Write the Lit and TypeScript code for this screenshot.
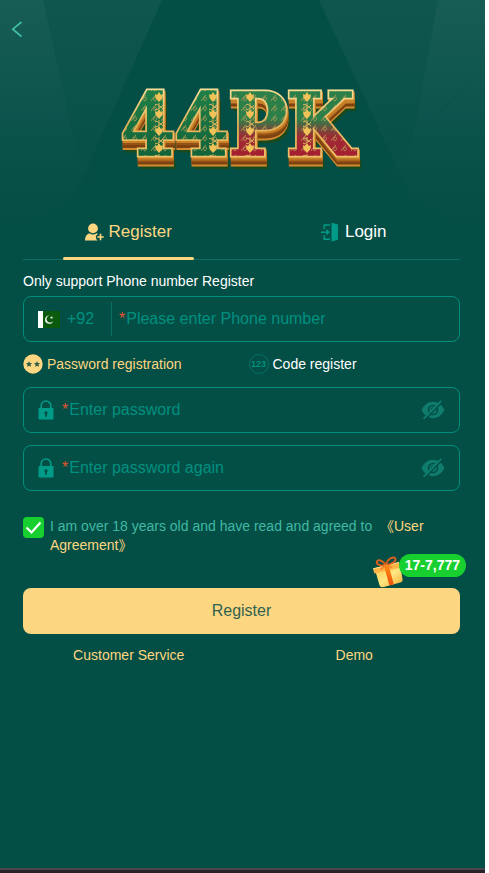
import { LitElement, html, css, svg } from "lit";
import { customElement, state } from "lit/decorators.js";

const backIcon = html`<svg width="12" height="18" viewBox="0 0 12 18" aria-hidden="true">
  <path d="M10.5 2 1.8 9.2l8.7 7.3" fill="none" stroke="#3fbfa8" stroke-width="1.7" />
</svg>`;

const userIcon = html`<svg width="20" height="20" viewBox="0 0 20 20" aria-hidden="true">
  <circle cx="9" cy="6.4" r="4.9" fill="#fdd681" />
  <path d="M1 18.6c0-4.200 1.600-6.400 4.400-7.400 2 1.600 5.200 1.600 7.200 0 .5.200.9.400 1.300.7-1.500.8-2.100 2-2 3.400.1 1.400.8 2.600 2 3.300z" fill="#fdd681" />
  <path d="M16.500 11.800v6.400M13.300 15h6.400" stroke="#fdd681" stroke-width="1.700" />
</svg>`;

const doorIcon = html`<svg width="20" height="20" viewBox="0 0 20 20" aria-hidden="true">
  <path d="M11.500.800 18 2.600v15.200L11.500 19.600z" fill="#009b88" />
  <path d="M10 3H4.200v4M4.200 13.300V17.300H10M1 10.200h7.500M6.300 7.800l2.500 2.400-2.500 2.400" fill="none" stroke="#009b88" stroke-width="1.400" />
</svg>`;

const flagIcon = html`<svg width="22" height="17" viewBox="0 0 22 17" aria-hidden="true">
  <rect width="22" height="17" fill="#0c5a0d" />
  <rect width="5" height="17" fill="#fff" />
  <path d="M11.500 4.400a4.200 4.200 0 1 0 3.700 5.500 3.600 3.600 0 1 1-3.700-5.500z" fill="#e6efe4" />
  <path d="m13.300 4.900.6 1 1.200-.1-.8.900.5 1.100-1.100-.5-.9.800.1-1.200-1-.6 1.200-.3z" fill="#e6efe4" />
</svg>`;

const starsIcon = html`<svg width="20" height="20" viewBox="0 0 20 20" aria-hidden="true">
  <circle cx="10" cy="10" r="9.700" fill="#fdd681" />
  <path d="m6 6.900.9 2 2.200.2-1.600 1.500.5 2.200L6 11.700l-2 1.100.5-2.200L2.900 9.100l2.200-.2zM14 6.900l.9 2 2.200.2-1.600 1.500.5 2.200-2-1.100-2 1.100.5-2.200-1.600-1.500 2.200-.2z" fill="#2d5e4a" />
</svg>`;

const lockIcon = html`<svg width="16" height="20" viewBox="0 0 16 20" aria-hidden="true">
  <path d="M3.200 9V5.800a4.800 4.800 0 0 1 9.600 0V9" fill="none" stroke="#009b88" stroke-width="1.600" />
  <rect x=".5" y="8" width="15" height="11.500" rx="1" fill="#009b88" />
  <path d="M8 11.200a1.700 1.700 0 0 1 .9 3.100v2.400H7.100v-2.400a1.700 1.700 0 0 1 .9-3.100z" fill="#034e45" />
</svg>`;

const eyeIcon = html`<svg width="24" height="20" viewBox="0 0 24 20" aria-hidden="true">
  <path d="M.5 10C3 5 7 1.800 12 1.800S21 5 23.500 10C21 15 17 18.200 12 18.200S3 15 .5 10z" fill="#0f7c6e" />
  <circle cx="12" cy="10" r="5.300" fill="#034e45" />
  <circle cx="12" cy="10" r="3.700" fill="#0f7c6e" />
  <path d="M12 7.800a2.200 2.200 0 0 0-2.200 2.200" fill="none" stroke="#034e45" stroke-width="1" />
  <path d="M21.200 2 4.600 19.200" stroke="#034e45" stroke-width="1.600" />
  <path d="M20.300.8 2.600 18.800" stroke="#0f7c6e" stroke-width="1.800" />
</svg>`;

const giftIcon = html`<svg class="gift" width="32" height="32" viewBox="0 0 32 32" aria-hidden="true">
  <defs>
    <linearGradient id="gift-box" x1="0" y1="0" x2="1" y2="1">
      <stop offset="0" stop-color="#ffc94d" /><stop offset=".5" stop-color="#ffe680" /><stop offset="1" stop-color="#fba930" />
    </linearGradient>
    <linearGradient id="gift-band" x1="0" y1="0" x2="0" y2="1">
      <stop offset="0" stop-color="#ff8a12" /><stop offset="1" stop-color="#f0520c" />
    </linearGradient>
  </defs>
  <path d="M3.500 15.500 28.500 10.500l2 12.600a3 3 0 0 1-2.300 3.500L11 31.200a3 3 0 0 1-3.500-2z" fill="url(#gift-box)" />
  <path d="M1 12.600 27 6.200l1.300 5.500L2.300 17.600z" fill="#ffb545" />
  <path d="M1.200 12.800 27 6.400" stroke="#ffe08a" stroke-width="1" />
  <path d="m12 10 4.500-1.100 5.400 19.500-4.500 1.100z" fill="url(#gift-band)" />
  <path d="M14 9C9 2.500 4.500 3.500 4.800 6.500 5.200 9.500 10 9.800 14 9zM14 9c1-6 7.500-9 9.200-6.600C25 5.500 19.500 8 14 9z" fill="none" stroke="#d9601e" stroke-width="1.900" />
  <path d="M14 9 8.500 13.500M14 9l6 2.500" stroke="#f5832c" stroke-width="1.800" />
</svg>`;

const beams = html`<svg class="beams" viewBox="0 0 485 250" preserveAspectRatio="none" aria-hidden="true">
  <defs>
    <linearGradient id="beam" gradientUnits="userSpaceOnUse" x1="0" y1="0" x2="0" y2="230">
      <stop offset="0" stop-color="#fff" stop-opacity=".05" /><stop offset="1" stop-color="#fff" stop-opacity="0" />
    </linearGradient>
    <linearGradient id="glow" gradientUnits="userSpaceOnUse" x1="0" y1="0" x2="0" y2="190">
      <stop offset="0" stop-color="#fff" stop-opacity=".035" /><stop offset="1" stop-color="#fff" stop-opacity="0" />
    </linearGradient>
  </defs>
  <g fill="url(#beam)">
    <path d="M0 0H162L75 195 0 240z" />
    <path d="M319 0H485V240L410 195z" />
  </g>
  <g fill="url(#glow)">
    <path d="M0 0H43L76 150 60 134 0 68z" />
    <path d="M0 68 120 200 0 240z" />
    <path d="M438 0H485V65L413 140z" />
    <path d="M485 65 360 200 485 240z" />
  </g>
</svg>`;

const sprigRows = [0, 1, 2, 3];
const sprigColumns = [38, 92, 129, 186];

const sprig = (x: number, y: number) => svg`<g transform="translate(${x} ${y})">
  <path d="M0-6 2-3 4-4 3.500 0 0 4-3.500 0-4-4-2-3z" fill="#f0c257" />
  <path d="M0 5v6M-4 7c3-3 5 5 8 0M-4 11c3 3 5-5 8 0" fill="none" stroke="#d9b45e" stroke-width="1" />
</g>`;

const logo = html`<svg class="logo" width="238" height="88" viewBox="0 0 238 88" role="img" aria-label="44PK">
  <defs>
    <text id="mark" x="0" y="71" class="mark">44PK</text>
    <mask id="face"><use href="#mark" fill="#fff" stroke="#fff" stroke-width="1.500" /></mask>
    <linearGradient id="rim" x1="0" y1="0" x2="0" y2="1">
      <stop offset="0" stop-color="#fff0b0" /><stop offset=".5" stop-color="#e3b35a" /><stop offset="1" stop-color="#f3c873" />
    </linearGradient>
    <linearGradient id="side" x1="0" y1="0" x2="0" y2="1">
      <stop offset="0" stop-color="#eda73b" /><stop offset=".6" stop-color="#8e4a13" /><stop offset="1" stop-color="#c37a25" />
    </linearGradient>
    <linearGradient id="enamel" x1="0" y1="0" x2="0" y2="1">
      <stop offset="0" stop-color="#1f8249" /><stop offset="1" stop-color="#0f5c36" />
    </linearGradient>
    <linearGradient id="ruby" x1="0" y1="0" x2="0" y2="1">
      <stop offset=".4" stop-color="#2d7f49" /><stop offset=".6" stop-color="#a02a34" /><stop offset="1" stop-color="#a8142c" />
    </linearGradient>
    <pattern id="filigree" width="10" height="10" patternUnits="userSpaceOnUse">
      <path d="M0 7c3-6 7-4 5-1S1 3 5 1" fill="none" stroke="#b9a055" stroke-width=".8" />
    </pattern>
  </defs>
  <use href="#mark" x="3" y="12" fill="#1a4a1c" stroke="#1a4a1c" stroke-width="4" />
  <use href="#mark" x="1" y="9" fill="#9c5716" stroke="#d18a30" stroke-width="5" />
  <use href="#mark" x="1" y="7" fill="#7e4210" stroke="#7e4210" stroke-width="5" />
  <use href="#mark" x="1" y="4" fill="#a9641c" stroke="url(#side)" stroke-width="5" />
  <use href="#mark" x="1" y="2" fill="#d38c2d" stroke="#c98126" stroke-width="5" />
  <use href="#mark" fill="url(#rim)" stroke="url(#rim)" stroke-width="5" />
  <g mask="url(#face)">
    <rect width="109" height="88" fill="url(#enamel)" />
    <rect x="109" width="129" height="88" fill="url(#ruby)" />
    <rect width="238" height="88" fill="url(#filigree)" />
    ${sprigColumns.map((x) => sprigRows.map((row) => sprig(x, 14 + row * 17)))}
  </g>
</svg>`;

@customElement("app-root")
export class AppRoot extends LitElement {
  @state() private mode = "password";

  static styles = css`
    :host {
      display: block;
      background: #fff;
      font-family: "Liberation Sans", Arial, "Noto Sans CJK SC", sans-serif;
      font-size: 14px;
      line-height: 18px;
      color: #fff;
    }
    *, *::before { box-sizing: border-box; }
    svg { display: block; flex: none; }
    button { font: inherit; border: 0; background: none; padding: 0; cursor: pointer; }
    .page {
      position: relative;
      display: flex;
      flex-direction: column;
      min-height: 100vh;
      margin-right: 4px;
      background: #034e45;
    }
    .beams { position: absolute; left: 0; top: 0; width: 100%; height: 250px; }
    .top { position: relative; height: 60px; padding: 20px 11px; }
    .back { display: block; color: #3fbfa8; }
    .logo { position: relative; align-self: center; margin: 24px 6px 32px 0; overflow: visible; }
    .mark { font-family: "DejaVu Serif Condensed", "DejaVu Serif", serif; font-weight: 700; font-size: 86px; }
    .content { position: relative; padding: 0 25px 0 23px; flex: 1; }
    .tabs, .modes, .links { display: grid; grid-template-columns: 1fr 1fr; column-gap: 14px; }
    .tabs { border-bottom: 1px solid #0b7063; }
    .tab {
      position: relative;
      display: flex;
      justify-content: center;
      align-items: center;
      gap: 5px;
      height: 55px;
      padding-right: 2px;
      color: #fff;
      font-size: 17px;
    }
    .tab.active { color: #fdd681; }
    .tab.active::before {
      content: "";
      position: absolute;
      left: 19%;
      right: 19%;
      bottom: -1px;
      height: 3px;
      border-radius: 2px;
      background: #fdd681;
    }
    .hint { margin: 12px 0 6px; }
    .field {
      display: flex;
      align-items: center;
      height: 46px;
      padding: 0 14px;
      border: 1px solid #008f7d;
      border-radius: 8px;
      color: #009080;
      font-size: 16px;
    }
    .code { display: flex; align-items: center; gap: 7px; width: 74px; height: 34px; border-right: 1px solid #0b7063; }
    .required { color: #e0532f; }
    .phone .required { margin-left: 7px; }
    .secret .required { margin-left: 8px; }
    .input {
      flex: 1;
      min-width: 0;
      padding: 0 0 0 1px;
      border: 0;
      outline: 0;
      background: none;
      color: #fff;
      font: inherit;
    }
    .input::placeholder { color: #009080; opacity: 1; }
    .secret + .secret { margin-top: 12px; }
    .modes { margin: 12px 0 13px; }
    .mode { position: relative; display: flex; align-items: center; gap: 4px; height: 20px; cursor: pointer; }
    .mode.active { color: #fdd681; }
    .radio { position: absolute; inset: 0; margin: 0; opacity: 0; }
    .digits {
      flex: none;
      width: 20px;
      height: 20px;
      border: 1px solid #0b7063;
      border-radius: 50%;
      color: #009080;
      font-size: 9px;
      font-weight: 700;
      text-align: center;
    }
    .consent { display: flex; gap: 6px; margin: 26px 0 33px; color: #40b9a4; }
    .check {
      appearance: none;
      flex: none;
      width: 21px;
      height: 21px;
      margin: 0;
      border-radius: 4px;
      background: #17d02f;
    }
    .tick { position: relative; display: block; height: 21px; }
    .tick svg { position: absolute; left: 0; top: 0; display: none; pointer-events: none; }
    .check:checked + svg { display: block; }
    .terms { line-height: 19px; }
    .link { color: #fdd681; text-decoration: none; }
    .submit-area { position: relative; }
    .submit {
      display: block;
      width: 100%;
      height: 46px;
      border-radius: 8px;
      background: #fdd681;
      color: #2f6350;
      font-size: 16px;
    }
    .bonus { position: absolute; right: -6px; top: -34px; display: flex; align-items: flex-start; pointer-events: none; }
    .gift { margin: 2px -5px 0 0; }
    .amount {
      position: relative;
      padding: 0 6px;
      border-radius: 12px;
      background: #17d02f;
      line-height: 23px;
      font-weight: 700;
    }
    .links { justify-items: center; margin-top: 12px; }
    .bottom { height: 5px; border-top: 2px solid #4a4649; background: #25232b; }
  `;

  private secret(label: string) {
    return html`<div class="field secret">
      ${lockIcon}
      <span class="required">*</span>
      <input class="input" type="password" placeholder=${label} aria-label=${label} />
      <button type="button" aria-label="Show password">${eyeIcon}</button>
    </div>`;
  }

  private option(value: string, label: string, icon: unknown) {
    const active = this.mode === value;
    return html`<label class="mode ${active ? "active" : ""}">
      <input class="radio" type="radio" name="mode" .checked=${active} @change=${() => (this.mode = value)} />
      ${icon}<span>${label}</span>
    </label>`;
  }

  render() {
    return html`<main class="page">
      ${beams}
      <header class="top"><button class="back" aria-label="Back">${backIcon}</button></header>
      ${logo}
      <div class="content">
        <nav class="tabs">
          <button class="tab active">${userIcon}<span>Register</span></button>
          <button class="tab">${doorIcon}<span>Login</span></button>
        </nav>
        <form @submit=${(e: Event) => e.preventDefault()}>
          <p class="hint">Only support Phone number Register</p>
          <div class="field phone">
            <span class="code">${flagIcon}<span>+92</span></span>
            <span class="required">*</span>
            <input class="input" type="tel" placeholder="Please enter Phone number" aria-label="Phone number" />
          </div>
          <div class="modes">
            ${this.option("password", "Password registration", starsIcon)}
            ${this.option("code", "Code register", html`<span class="digits">123</span>`)}
          </div>
          ${this.secret("Enter password")} ${this.secret("Enter password again")}
          <div class="consent">
            <span class="tick">
              <input class="check" id="adult" type="checkbox" checked />
              <svg width="21" height="21" viewBox="0 0 21 21" aria-hidden="true">
                <path d="m3.500 10.500 5 5L17.500 5.500" fill="none" stroke="#fff" stroke-width="2.200" />
              </svg>
            </span>
            <label class="terms" for="adult">I am over 18 years old and have read and agreed to&nbsp;
              <a class="link" href="#agreement">《User Agreement》</a></label>
          </div>
          <div class="submit-area">
            <button class="submit" type="submit">Register</button>
            <div class="bonus">${giftIcon}<span class="amount">17-7,777</span></div>
          </div>
        </form>
        <div class="links">
          <a class="link" href="#service">Customer Service</a>
          <a class="link" href="#demo">Demo</a>
        </div>
      </div>
      <div class="bottom"></div>
    </main>`;
  }
}
